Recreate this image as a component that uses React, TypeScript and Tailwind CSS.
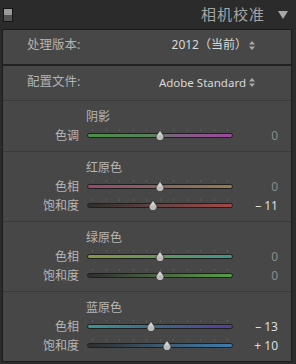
interface SliderDef {
  label: string;
  value: number;
  track: string;
}

interface Section {
  title: string;
  sliders: SliderDef[];
}

const sections: Section[] = [
  {
    title: "阴影",
    sliders: [
      {
        label: "色调",
        value: 0,
        track: "bg-[linear-gradient(to_right,#4a9048,#5a805a_45%,#766676_55%,#9c489e)]",
      },
    ],
  },
  {
    title: "红原色",
    sliders: [
      { label: "色相", value: 0, track: "bg-[linear-gradient(to_right,#984870,#86665c_50%,#9a7a50)]" },
      { label: "饱和度", value: -11, track: "bg-[linear-gradient(to_right,#2e2e2e,#664444_50%,#a44848)]" },
    ],
  },
  {
    title: "绿原色",
    sliders: [
      { label: "色相", value: 0, track: "bg-[linear-gradient(to_right,#8a9646,#66945a_50%,#3e968e)]" },
      { label: "饱和度", value: 0, track: "bg-[linear-gradient(to_right,#2e2e2e,#4c6644_50%,#569e48)]" },
    ],
  },
  {
    title: "蓝原色",
    sliders: [
      { label: "色相", value: -13, track: "bg-[linear-gradient(to_right,#3e9692,#3c6688_50%,#583c9c)]" },
      { label: "饱和度", value: 10, track: "bg-[linear-gradient(to_right,#2e2e2e,#3e586c_50%,#3e7cae)]" },
    ],
  },
];

function formatValue(v: number) {
  if (v === 0) return "0";
  return v < 0 ? `– ${Math.abs(v)}` : `+ ${v}`;
}

function UpDown() {
  return (
    <svg width="6" height="9" viewBox="0 0 6 9" className="shrink-0">
      <path d="M0 3.6 L3 0 L6 3.6 Z" fill="#a9a9a9" />
      <path d="M0 5.4 L3 9 L6 5.4 Z" fill="#a9a9a9" />
    </svg>
  );
}

function SliderRow({ label, value, track }: SliderDef) {
  // thumb centre, px from the track's left edge
  const center = 5.5 + ((value + 100) / 200) * 135;
  return (
    <div className="flex h-[19px]">
      <div className="w-[76px] text-right text-[12px] leading-[19px] text-[#b6b6b6]">{label}</div>
      <div className="relative ml-[8px] h-[19px] w-[146px]">
        <div className="flex justify-between px-[5px] pt-[3px]">
          {Array.from({ length: 11 }).map((_, i) => (
            <div key={i} className="h-[2px] w-px bg-[#5c5c5c]" />
          ))}
        </div>
        <div className={`mt-[2px] h-[5px] rounded-full border border-[#1f1f1f] ${track}`} />
        <svg
          width="10"
          height="10"
          viewBox="0 0 10 10"
          className="absolute top-[4px]"
          style={{ left: center - 5 }}
        >
          <path d="M5 0.3 L1.3 5.6 A3.9 3.9 0 1 0 8.7 5.6 Z" fill="#bcbcbc" stroke="#2b2b2b" strokeWidth="0.7" />
          <path d="M5 1.5 L2.6 5.2 L7.4 5.2 Z" fill="#d2d2d2" />
        </svg>
      </div>
      <div
        className={`flex-1 pr-[13px] text-right text-[12px] leading-[19px] ${
          value === 0 ? "text-[#8a8a8a]" : "text-[#dedede]"
        }`}
      >
        {formatValue(value)}
      </div>
    </div>
  );
}

export default function App() {
  return (
    <div className="h-[364px] w-[296px] overflow-hidden bg-[#2b2b2b] font-['Noto_Sans','Noto_Sans_CJK_SC',sans-serif]">
      <div className="flex h-[29px] items-center">
        <div className="ml-[3px] flex h-[14px] w-[10px] flex-col border border-[#151515]">
          <div className="flex-1 bg-[#9a9a9a]" />
          <div className="flex-1 bg-[#525252]" />
        </div>
        <div className="ml-auto text-[15px] tracking-[1px] text-[#a4a4a4]">相机校准</div>
        <svg width="10" height="8" viewBox="0 0 10 8" className="ml-[13px] mr-[8px]">
          <path d="M0 0 L10 0 L5 8 Z" fill="#a8a8a8" />
        </svg>
      </div>

      <div className="ml-[2px] flex h-[333px] w-[290px] flex-col border border-[#1c1c1c] bg-[#474747]">
        <div className="flex h-[34px] items-start pt-[7px] pl-[24px] pr-[36px]">
          <div className="text-[12.5px] leading-[16px] text-[#b2b2b2]">处理版本:</div>
          <div className="ml-auto flex items-center gap-[2px] text-[12px] leading-[16px] text-[#d8d8d8]">
            <span>2012（当前）</span>
            <UpDown />
          </div>
        </div>
        <div className="h-[2px] bg-[#222222]" />
        <div className="flex h-[35px] items-center pl-[24px] pr-[36px]">
          <div className="text-[12.5px] text-[#b2b2b2]">配置文件:</div>
          <div className="ml-auto flex items-center gap-[3px] text-[11.5px] text-[#d8d8d8]">
            <span>Adobe Standard</span>
            <UpDown />
          </div>
        </div>

        {sections.map((s) => (
          <div key={s.title}>
            <div className="h-px bg-[#3a3a3a]" />
            <div className="pt-[6px] pb-[6px]">
              <div className="h-[19px] pl-[83px] text-[12px] leading-[19px] text-[#b6b6b6]">{s.title}</div>
              {s.sliders.map((sl) => (
                <SliderRow key={sl.label} {...sl} />
              ))}
            </div>
          </div>
        ))}
      </div>
    </div>
  );
}
